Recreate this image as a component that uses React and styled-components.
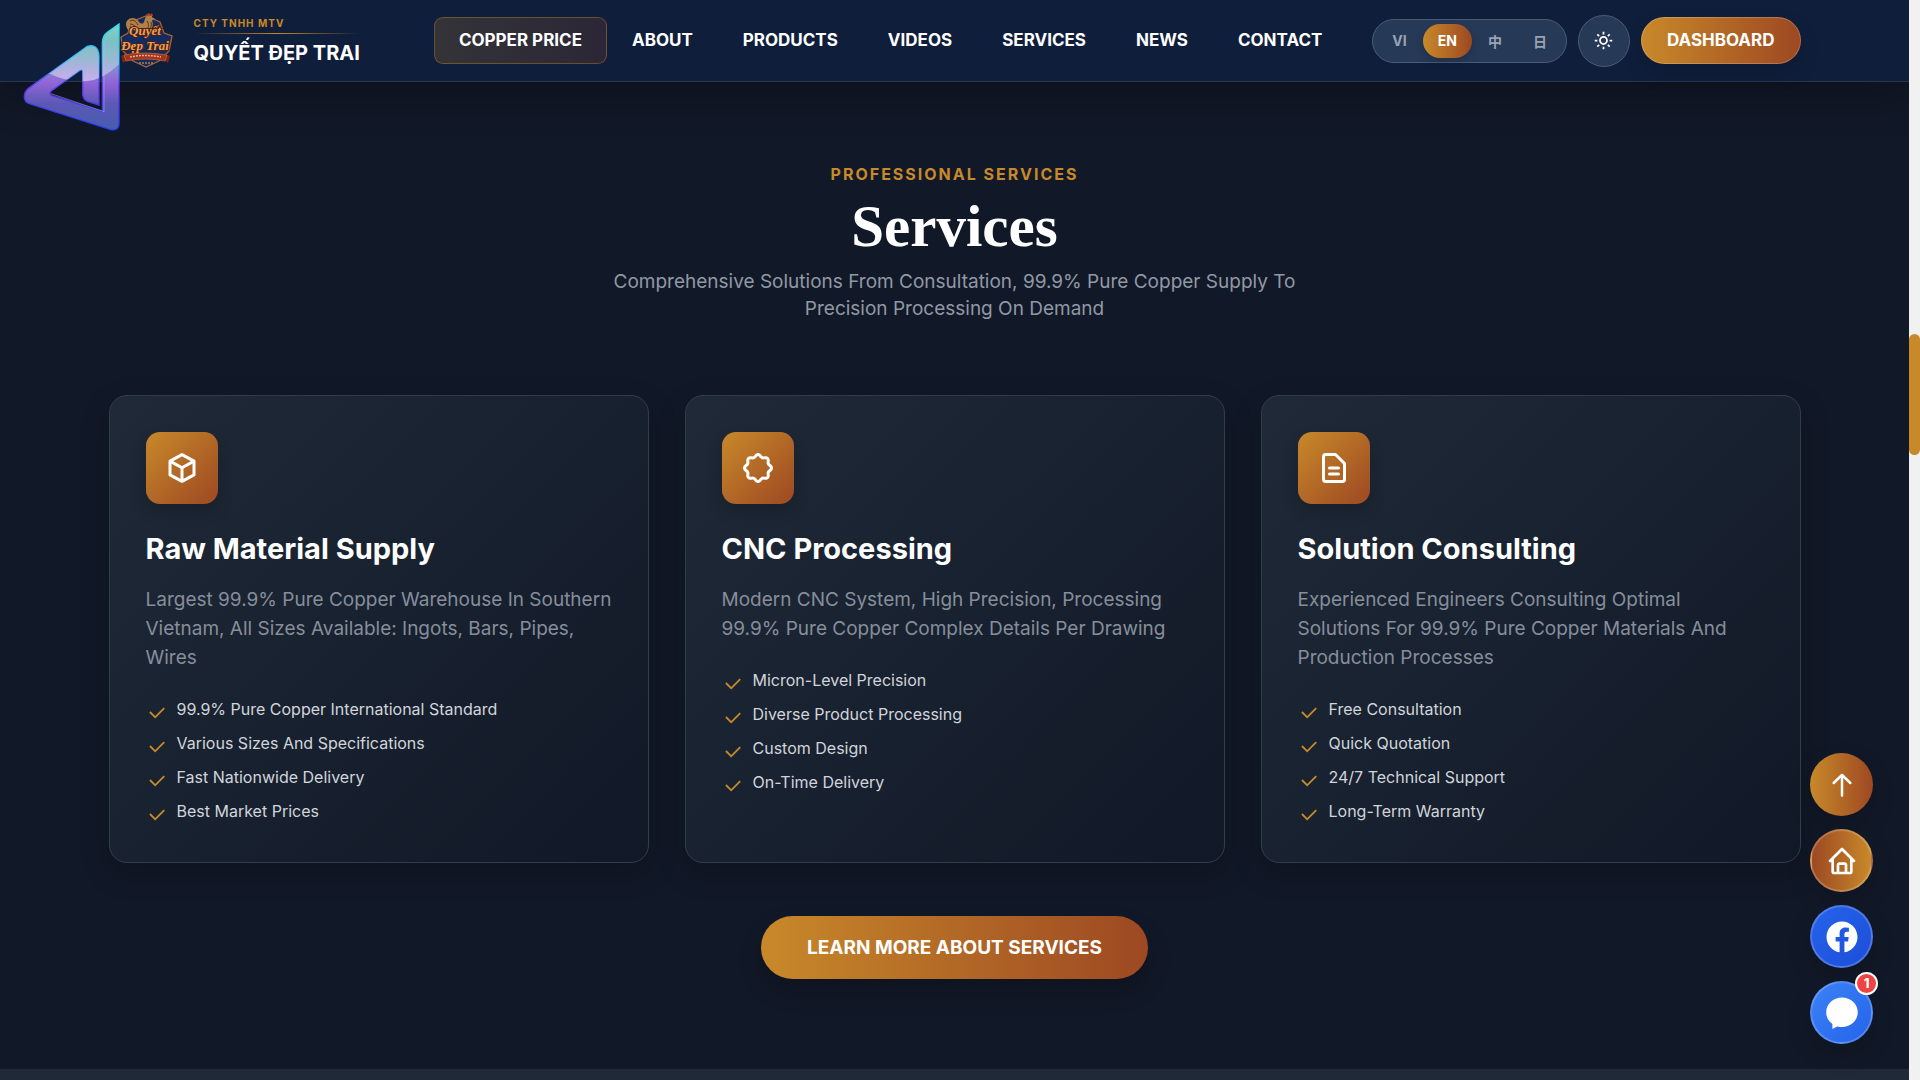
import { useState } from "react";
import styled, { createGlobalStyle } from "styled-components";
import { BiHome, BiSun } from "react-icons/bi";
import { FaFacebook } from "react-icons/fa";

const gold = "#c8892a";
const copper = "#9d4822";

const GlobalStyle = createGlobalStyle`
    * {
        box-sizing: border-box;
    }
    body {
        margin: 0;
        background: #111827;
        color: #fff;
        font-family: Inter, "Noto Sans CJK SC", sans-serif;
        font-size: 18px;
    }
    button {
        font-family: inherit;
        cursor: pointer;
    }
`;

const Layout = styled.div`
    display: flex;
    min-height: 100vh;
`;

const Page = styled.div`
    flex: 1;
    min-width: 0;
    display: flex;
    flex-direction: column;
`;

const Container = styled.div`
    width: 100%;
    max-width: 1740px;
    margin: 0 auto;
    padding: 0 24px;
`;

/* Header */

const Header = styled.header`
    background: #0f1e3b;
    border-bottom: 1px solid #2a3650;
    box-shadow: 0 12px 40px rgba(0, 0, 0, .3);
`;

const HeaderRow = styled(Container)`
    display: flex;
    align-items: center;
    min-height: 81px;
`;

const Brand = styled.a`
    display: flex;
    align-items: center;
    gap: 13px;
    color: #fff;
    text-decoration: none;
`;

const BrandText = styled.div`
    display: flex;
    flex-direction: column;
    padding-bottom: 2px;
`;

const BrandTop = styled.span`
    font-size: 10px;
    line-height: 16px;
    font-weight: 700;
    letter-spacing: 1px;
    color: ${gold};
`;

const BrandLine = styled.span`
    height: 1px;
    margin: 2px 0 8px;
    background: linear-gradient(90deg, transparent, ${gold}, transparent);
`;

const BrandName = styled.span`
    font-size: 20px;
    line-height: 22px;
    font-weight: 700;
    white-space: nowrap;
`;

const Nav = styled.nav`
    display: flex;
    margin-left: auto;
`;

const NavLink = styled.a`
    padding: 12px 24px;
    border: 1px solid ${({ $active }) => ($active ? "rgba(200, 137, 42, .4)" : "transparent")};
    border-radius: 9px;
    background: ${({ $active }) => ($active ? "linear-gradient(90deg, rgba(200, 137, 42, .2), rgba(157, 72, 34, .2))" : "none")};
    color: #fff;
    font-size: 17px;
    line-height: 21px;
    font-weight: 700;
    white-space: nowrap;
    text-decoration: none;
`;

const Actions = styled.div`
    display: flex;
    align-items: center;
    gap: 11px;
    margin-left: 25px;
`;

const LangSwitch = styled.div`
    display: flex;
    gap: 1px;
    padding: 4px;
    border: 1px solid #4a5b76;
    border-radius: 22px;
    background: #263957;
`;

const LangButton = styled.button`
    height: 34px;
    padding: 0 15px;
    border: 0;
    border-radius: 17px;
    background: ${({ $active }) => ($active ? `linear-gradient(90deg, ${gold}, ${copper})` : "none")};
    box-shadow: ${({ $active }) => ($active ? "0 4px 8px rgba(0, 0, 0, .15)" : "none")};
    color: ${({ $active }) => ($active ? "#fff" : "#98a3b3")};
    font-size: 14px;
    font-weight: 700;
`;

const ThemeButton = styled.button`
    display: flex;
    align-items: center;
    justify-content: center;
    width: 52px;
    height: 52px;
    padding: 0;
    border: 1px solid #4a5b76;
    border-radius: 50%;
    background: #263957;
    color: #fff;
`;

const DashboardLink = styled.a`
    padding: 12px 25px;
    border: 1px solid rgba(255, 255, 255, .2);
    border-radius: 24px;
    background: linear-gradient(90deg, ${gold}, ${copper}) border-box;
    box-shadow: 0 10px 20px rgba(0, 0, 0, .15);
    color: #fff;
    font-size: 17px;
    line-height: 21px;
    font-weight: 700;
    text-decoration: none;
`;

const FloatingLogo = styled.svg`
    position: fixed;
    z-index: 5;
    top: 23px;
    left: 23px;
    width: 97px;
    height: 108px;
`;

/* Services */

const Section = styled.section`
    padding: 80px 0 90px;
`;

const SectionHead = styled.div`
    display: flex;
    flex-direction: column;
    align-items: center;
    margin-bottom: 73px;
    text-align: center;
`;

const Eyebrow = styled.span`
    font-size: 16px;
    line-height: 24px;
    font-weight: 700;
    letter-spacing: 2px;
    color: ${gold};
`;

const Title = styled.h2`
    margin: 8px 0 10px;
    font-family: "Liberation Serif", serif;
    font-size: 59px;
    line-height: 64px;
    font-weight: 700;
`;

const Subtitle = styled.p`
    max-width: 720px;
    margin: 0;
    font-size: 19px;
    line-height: 27px;
    color: #9198a5;
`;

const Cards = styled.div`
    display: grid;
    grid-template-columns: repeat(3, 1fr);
    gap: 36px;
`;

const Card = styled.article`
    padding: 36px;
    border: 1px solid #313d4d;
    border-radius: 18px;
    background: linear-gradient(135deg, #1f2937, #18212f 50%, #111827);
    box-shadow: 0 10px 30px rgba(0, 0, 0, .2);
`;

const CardIcon = styled.div`
    display: flex;
    align-items: center;
    justify-content: center;
    width: 72px;
    height: 72px;
    margin-bottom: 27px;
    border-radius: 14px;
    background: linear-gradient(135deg, ${gold}, ${copper});
    box-shadow: 0 8px 16px rgba(0, 0, 0, .15);
`;

const CardTitle = styled.h3`
    margin: 0 0 18px;
    font-size: 29px;
    line-height: 36px;
    font-weight: 700;
`;

const CardText = styled.p`
    margin: 0 0 25px;
    font-size: 19px;
    line-height: 29px;
    color: #868e9b;
`;

const Features = styled.ul`
    display: flex;
    flex-direction: column;
    gap: 7px;
    margin: 0;
    padding: 0;
    list-style: none;
`;

const Feature = styled.li`
    display: flex;
    align-items: flex-start;
    gap: 9px;
    font-size: 16px;
    line-height: 24px;
    color: #d1d5db;

    svg {
        flex: none;
        margin-top: 5px;
    }
`;

const MoreRow = styled.div`
    display: flex;
    justify-content: center;
    margin-top: 53px;
`;

const MoreLink = styled.a`
    padding: 18px 46px;
    border-radius: 32px;
    background: linear-gradient(90deg, ${gold}, ${copper});
    box-shadow: 0 12px 24px rgba(0, 0, 0, .2);
    color: #fff;
    font-size: 19px;
    line-height: 27px;
    font-weight: 700;
    text-decoration: none;
`;

const NextSection = styled.section`
    flex: 1;
    min-height: 11px;
    background: #1f2937;
`;

/* Scroll rail and floating buttons */

const Rail = styled.div`
    position: sticky;
    top: 0;
    width: 11px;
    height: 100vh;
    padding-top: 334px;
    background: #f1f1f1;
`;

const RailThumb = styled.div`
    height: 121px;
    border-radius: 6px;
    background: ${gold};
`;

const Floating = styled.div`
    position: fixed;
    z-index: 5;
    right: 47px;
    bottom: 36px;
    display: flex;
    flex-direction: column;
    gap: 13px;
`;

const RoundButton = styled.button`
    position: relative;
    display: flex;
    align-items: center;
    justify-content: center;
    width: 63px;
    height: 63px;
    padding: 0;
    border: ${({ $plain }) => ($plain ? "0" : "2px solid rgba(255, 255, 255, .2)")};
    border-radius: 50%;
    background: ${({ $bg }) => $bg};
    box-shadow: 0 10px 24px rgba(0, 0, 0, .15);
    color: #fff;
`;

const Badge = styled.span`
    position: absolute;
    top: -11px;
    right: -7px;
    width: 23px;
    height: 23px;
    border: 2px solid #fff;
    border-radius: 50%;
    background: #ef4444;
    font-size: 13px;
    line-height: 19px;
    font-weight: 800;
    text-align: center;
`;

const CubeIcon = () => (
    <svg width="36" height="36" viewBox="0 0 24 24" fill="none" stroke="#fff" strokeWidth="2" strokeLinejoin="round">
        <path d="M12 3.1 20 7.4v9.2l-8 4.3-8-4.3V7.4z" />
        <path d="m4 7.4 8 4.4 8-4.4M12 11.8v9" />
    </svg>
);

// eight rounded teeth around a circle
const cogPoints = Array.from({ length: 96 }, (_, i) => {
    const angle = (i / 96) * Math.PI * 2;
    const radius = 8.2 + 0.8 * Math.cos(angle * 8);
    return `${(12 + radius * Math.sin(angle)).toFixed(2)},${(12 - radius * Math.cos(angle)).toFixed(2)}`;
}).join(" ");

const CogIcon = () => (
    <svg width="36" height="36" viewBox="0 0 24 24" fill="none" stroke="#fff" strokeWidth="2" strokeLinejoin="round">
        <polygon points={cogPoints} />
    </svg>
);

const FileIcon = () => (
    <svg width="36" height="36" viewBox="0 0 24 24" fill="none" stroke="#fff" strokeWidth="2" strokeLinejoin="round">
        <path d="M6.5 3H13l6 6v10.5a1.5 1.5 0 0 1-1.5 1.5h-11A1.5 1.5 0 0 1 5 19.5v-15A1.5 1.5 0 0 1 6.5 3z" />
        <path d="M9 12h6M9 16h6" strokeLinecap="round" />
    </svg>
);

const CheckIcon = () => (
    <svg width="22" height="22" viewBox="0 0 24 24" fill={gold}>
        <path d="M10 15.2 19.2 6l1.4 1.4L10 18l-6.4-6.4 1.4-1.4z" />
    </svg>
);

const ArrowIcon = () => (
    <svg width="28" height="28" viewBox="0 0 28 28" fill="none" stroke="#fff" strokeWidth="2.5" strokeLinecap="round" strokeLinejoin="round">
        <path d="M14 24.5V4M5.7 12 14 3.800 22.3 12" />
    </svg>
);

const MessageIcon = () => (
    <svg width="32" height="32" viewBox="0 0 32 32" fill="#fff">
        <path d="M16 .5c8.800 0 15.800 6.400 15.800 14.800S24.800 30 16 30c-1.700 0-3.300-.2-4.800-.6L6.400 32v-5C2.600 24.300.2 20.100.2 15.300.2 6.900 7.200.5 16 .5z" />
    </svg>
);

const AiLogo = () => {
    const shape = "M357 72 322 97Q307 108 307 128V334L156 287Q146 282 153 274L240 211Q248 206 248 216V285Q250 300 264 305L297 315V168Q294 130 262 139L85 265Q73 275 73 290Q73 306 88 311L332 389Q357 393 357 370Z";

    return (
        <FloatingLogo viewBox="69 69 291 324" role="img" aria-label="AI">
            <defs>
                <linearGradient id="aiFill" gradientUnits="userSpaceOnUse" x1="0" y1="72" x2="0" y2="390">
                    <stop offset="0" stopColor="#7ed6c4" />
                    <stop offset=".3" stopColor="#79adc4" />
                    <stop offset=".55" stopColor="#9265d8" />
                    <stop offset=".75" stopColor="#5c58b4" />
                    <stop offset="1" stopColor="#455db0" />
                </linearGradient>
                <linearGradient id="aiEdge" gradientUnits="userSpaceOnUse" x1="0" y1="72" x2="0" y2="390">
                    <stop offset="0" stopColor="#35e6ee" />
                    <stop offset=".35" stopColor="#22a8ee" />
                    <stop offset=".6" stopColor="#5a35ee" />
                    <stop offset="1" stopColor="#2b3cf5" />
                </linearGradient>
                <linearGradient id="aiGloss" gradientUnits="userSpaceOnUse" x1="0" y1="120" x2="0" y2="245">
                    <stop offset="0" stopColor="#fff" stopOpacity="0" />
                    <stop offset="1" stopColor="#fff" stopOpacity=".5" />
                </linearGradient>
                <clipPath id="aiClip">
                    <path d={shape} />
                </clipPath>
            </defs>
            <path d={shape} fill="url(#aiFill)" stroke="url(#aiEdge)" strokeWidth="4" />
            <path d="M60 60H360V190Q310 240 262 243Q200 247 152 222L60 222Z" fill="url(#aiGloss)" clipPath="url(#aiClip)" />
            <path d="M153 281 312 335V118" fill="none" stroke="#b8b4f2" strokeOpacity=".5" strokeWidth="3" />
        </FloatingLogo>
    );
};

const Emblem = () => (
    <svg width="72" height="56" viewBox="0 0 72 56" role="img" aria-label="Quyết Đẹp Trai">
        <path d="M37 3 51 9 55 20 63 23 60 38 50 48 37 54 24 48 14 38 12 24 19 20 22 9z" fill="#122b63" stroke="#a9652f" strokeWidth="1.3" />
        <path d="M34 19c-6 1-11-2-13-7l-1 6c-4-4-4-10 0-12 3-2 8-1 10 3 2 2 4 2 5 0 1-3 1-5 3-6l-1-2 2 1 1-2 1 2 2-1v3l3 2-3 1c2 6 0 11-5 13z" fill="#b08048" />
        <path d="M21 8c3-2 6 0 8 4M21 11c3 0 5 2 7 4M38 8c2 3 2 6 0 9M42 9c1 3 0 5-1 7" fill="none" stroke="#5a3018" />
        <path d="m38 3 1-3 2 2 2-2 1 3z" fill="#c4391f" />
        <g fontFamily="Liberation Serif, serif" fontStyle="italic" fontWeight="700" fontSize="13" fill="#eca05a" stroke="#4b2211" strokeWidth="2" paintOrder="stroke" textAnchor="middle">
            <text x="36" y="22">Quyết</text>
            <text x="36" y="37">Đẹp Trai</text>
        </g>
        <path d="M12 43 17 41v7l-3 2zM61 43l-5-2v7l3 2z" fill="#7c2417" />
        <path d="M15 42Q36 38 58 42L56 48Q36 44 17 48z" fill="#a43220" stroke="#d17a3a" strokeWidth=".6" />
        <path d="M21 44Q36 41 52 44" fill="none" stroke="#e8b584" strokeWidth="1.5" strokeDasharray="2 1" />
        <path d="M30 50h14" stroke="#b77b46" strokeWidth="1.5" strokeDasharray="2 1" />
    </svg>
);

const links = ["COPPER PRICE", "ABOUT", "PRODUCTS", "VIDEOS", "SERVICES", "NEWS", "CONTACT"];

const languages = ["VI", "EN", "中", "日"];

const services = [
    {
        icon: <CubeIcon />,
        title: "Raw Material Supply",
        text: "Largest 99.9% Pure Copper Warehouse In Southern Vietnam, All Sizes Available: Ingots, Bars, Pipes, Wires",
        features: ["99.9% Pure Copper International Standard", "Various Sizes And Specifications", "Fast Nationwide Delivery", "Best Market Prices"],
    },
    {
        icon: <CogIcon />,
        title: "CNC Processing",
        text: "Modern CNC System, High Precision, Processing 99.9% Pure Copper Complex Details Per Drawing",
        features: ["Micron-Level Precision", "Diverse Product Processing", "Custom Design", "On-Time Delivery"],
    },
    {
        icon: <FileIcon />,
        title: "Solution Consulting",
        text: "Experienced Engineers Consulting Optimal Solutions For 99.9% Pure Copper Materials And Production Processes",
        features: ["Free Consultation", "Quick Quotation", "24/7 Technical Support", "Long-Term Warranty"],
    },
];

export default function App() {
    const [lang, setLang] = useState("EN");

    return (
        <Layout>
            <GlobalStyle />
            <Page>
                <Header>
                    <HeaderRow>
                        <Brand href="#home">
                            <Emblem />
                            <BrandText>
                                <BrandTop>CTY TNHH MTV</BrandTop>
                                <BrandLine />
                                <BrandName>QUYẾT ĐẸP TRAI</BrandName>
                            </BrandText>
                        </Brand>
                        <Nav>
                            {links.map((link, i) => (
                                <NavLink key={link} href="#services" $active={i === 0}>{link}</NavLink>
                            ))}
                        </Nav>
                        <Actions>
                            <LangSwitch>
                                {languages.map((l) => (
                                    <LangButton key={l} $active={l === lang} onClick={() => setLang(l)}>{l}</LangButton>
                                ))}
                            </LangSwitch>
                            <ThemeButton aria-label="Theme"><BiSun size={21} /></ThemeButton>
                            <DashboardLink href="#dashboard">DASHBOARD</DashboardLink>
                        </Actions>
                    </HeaderRow>
                </Header>
                <Section id="services">
                    <Container>
                        <SectionHead>
                            <Eyebrow>PROFESSIONAL SERVICES</Eyebrow>
                            <Title>Services</Title>
                            <Subtitle>
                                Comprehensive Solutions From Consultation, 99.9% Pure Copper Supply To Precision Processing On Demand
                            </Subtitle>
                        </SectionHead>
                        <Cards>
                            {services.map((service) => (
                                <Card key={service.title}>
                                    <CardIcon>{service.icon}</CardIcon>
                                    <CardTitle>{service.title}</CardTitle>
                                    <CardText>{service.text}</CardText>
                                    <Features>
                                        {service.features.map((feature) => (
                                            <Feature key={feature}><CheckIcon />{feature}</Feature>
                                        ))}
                                    </Features>
                                </Card>
                            ))}
                        </Cards>
                        <MoreRow>
                            <MoreLink href="#services">LEARN MORE ABOUT SERVICES</MoreLink>
                        </MoreRow>
                    </Container>
                </Section>
                <NextSection />
            </Page>
            <Rail aria-hidden="true"><RailThumb /></Rail>
            <AiLogo />
            <Floating>
                <RoundButton $plain $bg={`linear-gradient(90deg, ${gold}, ${copper})`} aria-label="Back to top"><ArrowIcon /></RoundButton>
                <RoundButton $bg={`linear-gradient(90deg, ${copper}, ${gold})`} aria-label="Home"><BiHome size={32} /></RoundButton>
                <RoundButton $bg="linear-gradient(135deg, #2563eb, #1d4ed8)" aria-label="Facebook"><FaFacebook size={32} /></RoundButton>
                <RoundButton $bg="linear-gradient(135deg, #3b82f6, #2563eb)" aria-label="Messages">
                    <MessageIcon />
                    <Badge>1</Badge>
                </RoundButton>
            </Floating>
        </Layout>
    );
}
